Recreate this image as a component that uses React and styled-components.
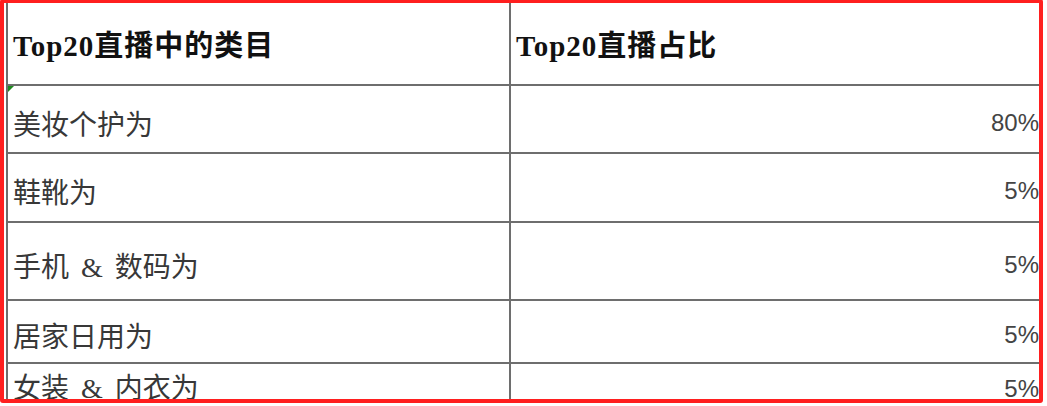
import React from "react";
import styled, { createGlobalStyle } from "styled-components";

const GlobalStyle = createGlobalStyle`
  html, body { margin: 0; padding: 0; background: #ffffff; }
  body { font-family: "Liberation Serif", "Noto Sans CJK SC", serif; }
`;

const Page = styled.div`
  position: relative;
  width: 1047px;
  height: 406px;
  overflow: hidden;
  background: #ffffff;
`;

const Sheet = styled.div`
  margin-left: 6px;
  width: 1034px;
  height: 400px;
  overflow: hidden;
  border-left: 2px solid #6e6e6e;
  box-sizing: border-box;
`;

const Row = styled.div`
  display: grid;
  grid-template-columns: 503px 1fr;
  height: ${(p) => p.$h}px;
  box-sizing: border-box;
  border-bottom: 2px solid #6e6e6e;
`;

const Cell = styled.div`
  position: relative;
  display: flex;
  align-items: ${(p) => (p.$top ? "flex-start" : "center")};
  justify-content: ${(p) => (p.$right ? "flex-end" : "flex-start")};
  padding-top: ${(p) =>
    p.$top ? (p.$right ? "11px" : "2px") : p.$head ? "1px" : "7px"};
  padding-left: ${(p) => (p.$right ? "0" : "5px")};
  padding-right: ${(p) => (p.$right ? "1px" : "0")};
  border-right: ${(p) => (p.$divider ? "2px solid #6e6e6e" : "none")};
  box-sizing: border-box;
  white-space: nowrap;
`;

const HeadText = styled.span`
  font-family: "Liberation Serif", "Noto Sans CJK SC", serif;
  font-weight: 700;
  font-size: 29px;
  letter-spacing: 1px;
  color: #111111;
`;

const BodyText = styled.span`
  font-family: "Liberation Serif", "Noto Sans CJK SC", serif;
  font-weight: 400;
  font-size: 28px;
  word-spacing: 5px;
  color: #383838;
`;

const Percent = styled.span`
  font-family: "Liberation Sans", Arial, sans-serif;
  font-size: 24px;
  color: #444444;
`;

const ErrorMark = styled.span`
  position: absolute;
  left: 0;
  top: 0;
  width: 0;
  height: 0;
  border-top: 6px solid #1f8a1f;
  border-right: 6px solid transparent;
`;

const Frame = styled.div`
  position: absolute;
  left: 0;
  top: -1px;
  width: 1043px;
  height: 404px;
  box-sizing: border-box;
  border: 4px solid #ff1f1f;
  border-radius: 3px;
  pointer-events: none;
`;

const rows = [
  { name: "美妆个护为", pct: "80%", h: 68, mark: true },
  { name: "鞋靴为", pct: "5%", h: 69 },
  { name: "手机 & 数码为", pct: "5%", h: 78 },
  { name: "居家日用为", pct: "5%", h: 63 },
  { name: "女装 & 内衣为", pct: "5%", h: 68, top: true },
];

export default function App() {
  return (
    <>
      <GlobalStyle />
      <Page>
        <Sheet>
          <Row $h={86}>
            <Cell $head $divider>
              <HeadText>Top20直播中的类目</HeadText>
            </Cell>
            <Cell $head>
              <HeadText>Top20直播占比</HeadText>
            </Cell>
          </Row>
          {rows.map((r) => (
            <Row key={r.name} $h={r.h}>
              <Cell $divider $top={r.top}>
                {r.mark && <ErrorMark />}
                <BodyText>{r.name}</BodyText>
              </Cell>
              <Cell $right $top={r.top}>
                <Percent>{r.pct}</Percent>
              </Cell>
            </Row>
          ))}
        </Sheet>
        <Frame />
      </Page>
    </>
  );
}
